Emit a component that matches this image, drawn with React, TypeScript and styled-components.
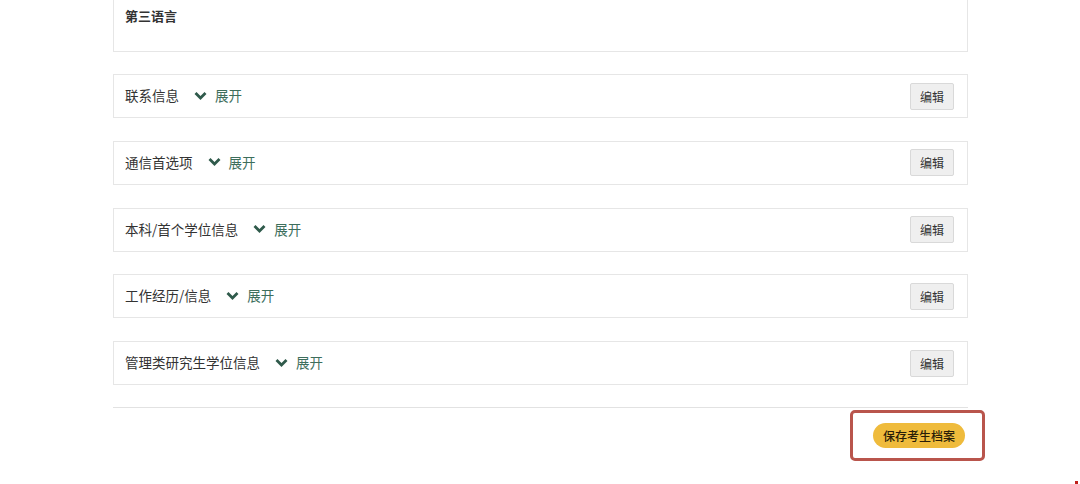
import React from "react";
import styled, { createGlobalStyle } from "styled-components";

const Global = createGlobalStyle`
  html, body { margin: 0; padding: 0; background: #fff; }
  body { font-family: "Noto Sans CJK SC", "Noto Sans", sans-serif; }
`;

const Page = styled.div`
  width: 1080px;
  height: 484px;
  overflow: hidden;
  position: relative;
  box-sizing: border-box;
  padding-left: 113px;
`;

const Column = styled.div`
  width: 855px;
  display: flex;
  flex-direction: column;
`;

const TopPanel = styled.div`
  box-sizing: border-box;
  height: 52px;
  border: 1px solid #e6e6e6;
  border-top: none;
  padding: 6px 0 0 11px;
  font-size: 13px;
  line-height: 20px;
  font-weight: 600;
  color: #333;
`;

const Rows = styled.div`
  display: flex;
  flex-direction: column;
  gap: 22.75px;
  margin-top: 22px;
`;

const Row = styled.div`
  box-sizing: border-box;
  height: 44px;
  border: 1px solid #e6e6e6;
  display: flex;
  align-items: center;
  padding: 0 13px 0 11px;
`;

const Title = styled.span`
  font-size: 13.5px;
  line-height: 20px;
  margin-top: -2px;
  color: #333;
`;

const Toggle = styled.span`
  display: inline-flex;
  align-items: center;
  margin-left: 15px;
  margin-top: -2px;
  gap: 8px;
  font-size: 13.5px;
  line-height: 20px;
  color: #3d6e5c;
`;

const Spacer = styled.div`
  flex: 1;
`;

const EditButton = styled.button`
  box-sizing: border-box;
  width: 44px;
  height: 27px;
  border: 1px solid #d9d9d9;
  background: #efefef;
  border-radius: 2px;
  font-family: "Noto Sans CJK SC", sans-serif;
  font-size: 12px;
  color: #333;
  padding: 0;
`;

const Divider = styled.div`
  height: 1px;
  background: #e2e2e2;
  margin-top: 22px;
`;

const Footer = styled.div`
  display: flex;
  justify-content: flex-end;
  margin-top: 2px;
  margin-right: -17px;
`;

const Highlight = styled.div`
  box-sizing: border-box;
  width: 135px;
  height: 51px;
  border: 3px solid #b9554c;
  border-radius: 5px;
  display: flex;
  align-items: center;
  justify-content: center;
`;

const SaveButton = styled.button`
  width: 92px;
  height: 25px;
  border: none;
  border-radius: 13px;
  background: #efbb3c;
  color: #2a1d08;
  font-family: "Noto Sans CJK SC", sans-serif;
  font-size: 12px;
  font-weight: 500;
  padding: 0;
  margin-left: 3px;
`;

const Mark = styled.div`
  position: absolute;
  right: 2px;
  bottom: 0;
  width: 3px;
  height: 3px;
  background: #c0201a;
`;

const Chevron = () => (
  <svg width="13" height="9" viewBox="0 0 13 9">
    <path d="M1.5 2 L6.5 7 L11.5 2" fill="none" stroke="#2f5a4b" strokeWidth="2.8" />
  </svg>
);

const sections = ["联系信息", "通信首选项", "本科/首个学位信息", "工作经历/信息", "管理类研究生学位信息"];

export default function App() {
  return (
    <Page>
      <Global />
      <Column>
        <TopPanel>第三语言</TopPanel>
        <Rows>
          {sections.map((s) => (
            <Row key={s}>
              <Title>{s}</Title>
              <Toggle>
                <Chevron />
                展开
              </Toggle>
              <Spacer />
              <EditButton>编辑</EditButton>
            </Row>
          ))}
        </Rows>
        <Divider />
        <Footer>
          <Highlight>
            <SaveButton>保存考生档案</SaveButton>
          </Highlight>
        </Footer>
      </Column>
      <Mark />
    </Page>
  );
}
